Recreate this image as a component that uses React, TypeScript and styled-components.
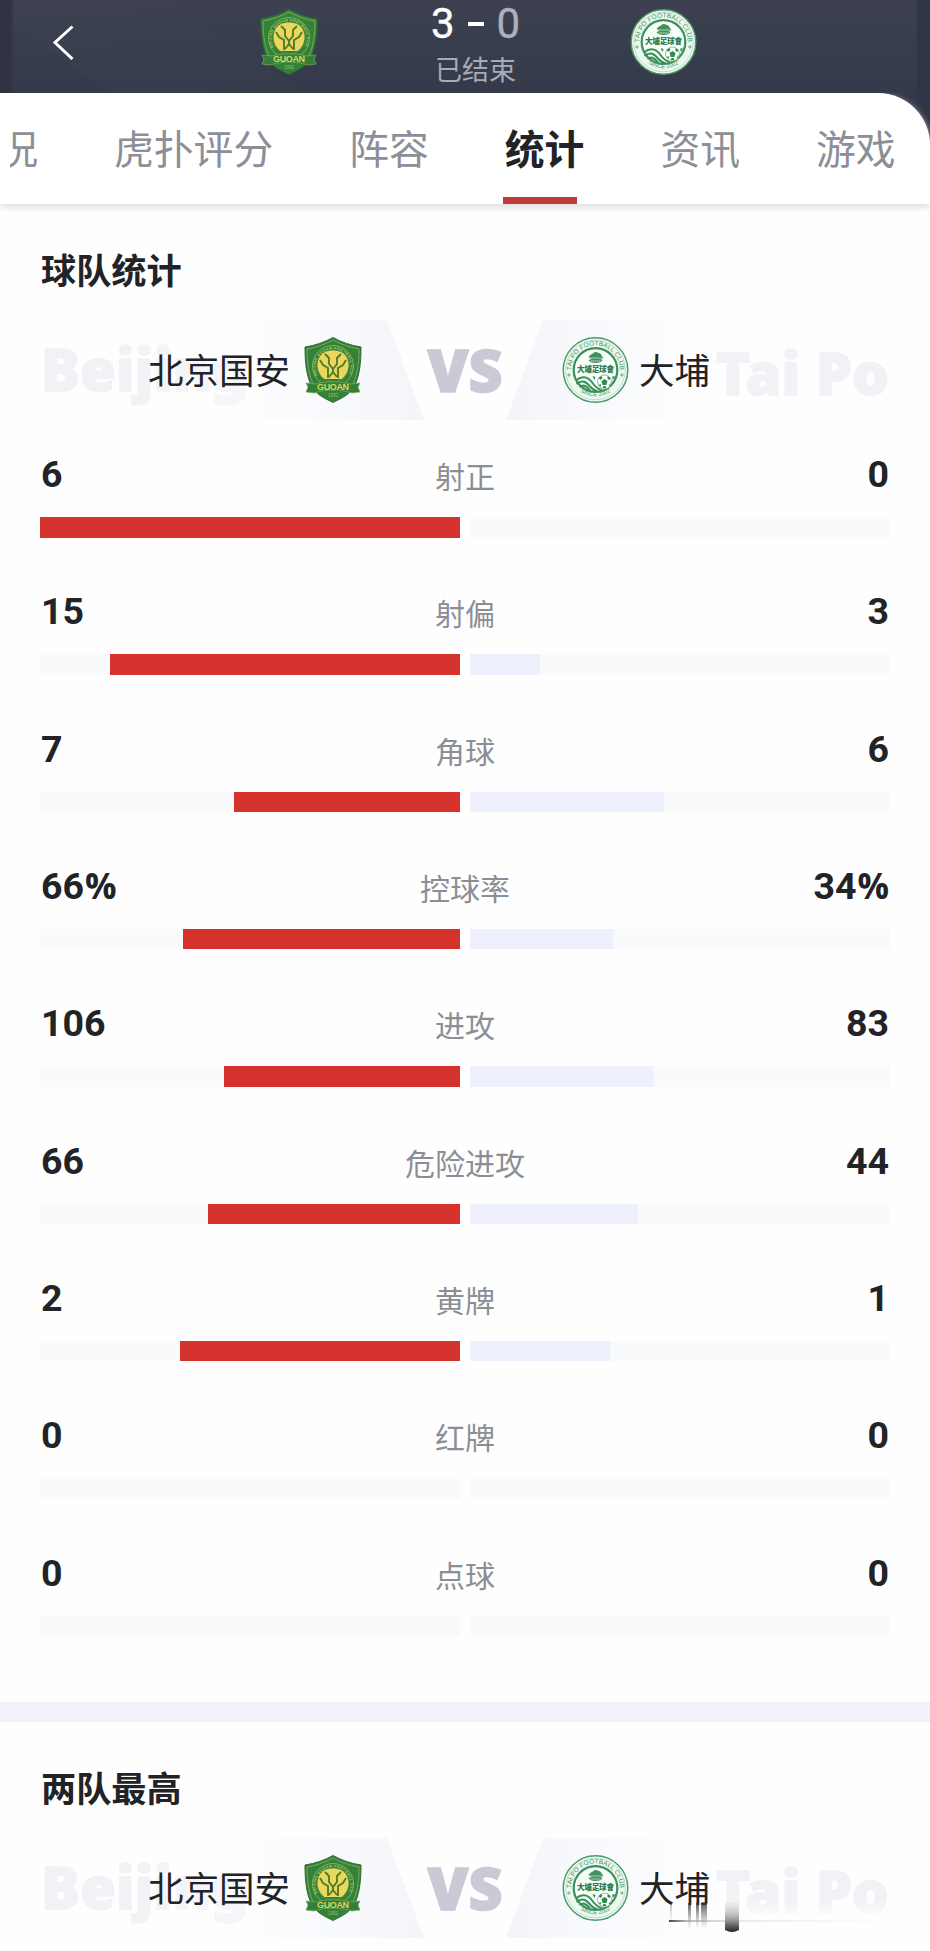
import React from "react";
import styled, { createGlobalStyle } from "styled-components";

interface Stat {
  label: string;
  home: number;
  away: number;
  unit?: string;
}

const tabs = ["况", "虎扑评分", "阵容", "统计", "资讯", "游戏"];
const activeTab = "统计";

const stats: Stat[] = [
  { label: "射正", home: 6, away: 0 },
  { label: "射偏", home: 15, away: 3 },
  { label: "角球", home: 7, away: 6 },
  { label: "控球率", home: 66, away: 34, unit: "%" },
  { label: "进攻", home: 106, away: 83 },
  { label: "危险进攻", home: 66, away: 44 },
  { label: "黄牌", home: 2, away: 1 },
  { label: "红牌", home: 0, away: 0 },
  { label: "点球", home: 0, away: 0 },
];

const GlobalStyle = createGlobalStyle`
  * {
    box-sizing: border-box;
  }

  body {
    margin: 0;
    background: #fefefe;
    font-family: "Noto Sans CJK SC", sans-serif;
    color: #222326;
  }

  svg {
    display: block;
  }
`;

const Page = styled.div`
  position: relative;
  width: 930px;
  height: 1951px;
  overflow: hidden;
`;

const Hero = styled.div`
  background:
    linear-gradient(90deg, #2d3140 0, #303443 11px, transparent 14px, transparent 915px, #2f3544 919px),
    linear-gradient(215deg, transparent 62%, #3f445233 62%, #41465533 78%, transparent 78%),
    linear-gradient(180deg, #3d4050 0, #383e4d 40px, #343a49 93px, #303645 100%);
`;

const Header = styled.header`
  height: 93px;
  display: grid;
  grid-template-columns: 260px 58px 1fr 67px 233px;
`;

const BackButton = styled.button`
  justify-self: start;
  height: 34px;
  margin: 25px 0 0 51px;
  padding: 0;
  border: 0;
  background: none;
`;

const HeaderBadge = styled.div`
  padding-top: 8.500px;
`;

const ScoreBox = styled.div`
  display: flex;
  flex-direction: column;
  align-items: center;
  padding-left: 3px;
`;

const Score = styled.div`
  display: flex;
  gap: 13px;
  height: 48px;
  color: #ffffff;
  font-family: Roboto, sans-serif;
  font-size: 42px;
  -webkit-text-stroke: 0.4px currentColor;
  line-height: 47px;
`;

const Dash = styled.i`
  width: 16px;
  height: 4px;
  margin-top: 22px;
  background: #ffffff;
`;

const LosingScore = styled.span`
  color: #adafba;
`;

const MatchState = styled.div`
  color: #a7aab7;
  font-size: 27px;
  line-height: 42px;
`;

const TabBar = styled.nav`
  position: relative;
  display: flex;
  gap: 76px;
  height: 111px;
  padding-left: 10px;
  border-top-right-radius: 52px;
  background: #ffffff;
  box-shadow: 0 3px 7px #dcdcdc;
  clip-path: inset(0 0 -12px 0);
`;

const Tab = styled.div<{ $active: boolean }>`
  flex: none;
  position: relative;
  color: ${(props) => (props.$active ? "#222326" : "#8c8e98")};
  font-size: 39.8px;
  font-weight: ${(props) => (props.$active ? 700 : 400)};
  line-height: 108px;

  &:first-child {
    display: flex;
    justify-content: flex-end;
    width: 28px;
    overflow: hidden;
  }

  &::after {
    content: "";
    display: ${(props) => (props.$active ? "block" : "none")};
    position: absolute;
    left: -2px;
    bottom: 0;
    width: 74px;
    height: 7px;
    background: #bf3a38;
  }
`;

const Section = styled.section`
  padding: 36px 40px 0;
`;

const SectionTitle = styled.h2`
  height: 60px;
  margin: 0 0 20px;
  padding-left: 1px;
  font-size: 35.2px;
  font-weight: 700;
  line-height: 57px;
`;

const Versus = styled.div`
  display: grid;
  grid-template-columns: 384px 82px 384px;
  height: 100px;
`;

const TeamSide = styled.div<{ $away?: boolean }>`
  position: relative;
  display: flex;
  align-items: center;
  justify-content: ${(props) => (props.$away ? "flex-start" : "flex-end")};
  gap: ${(props) => (props.$away ? "10px" : "14px")};
  padding: ${(props) => (props.$away ? "0 0 0 56px" : "0 62px 0 0")};
  background: linear-gradient(
    ${(props) => (props.$away ? "90deg" : "270deg")},
    #f4f5fa,
    #f9fafd 100px,
    #fefefe 200px
  );
  clip-path: ${(props) =>
    props.$away
      ? "polygon(37px 0, 100% 0, 100% 100%, 0 100%)"
      : "polygon(0 0, 347px 0, 100% 100%, 0 100%)"};
`;

// Latin team name behind the row
const GhostName = styled.span<{ $away?: boolean }>`
  position: absolute;
  top: ${(props) => (props.$away ? "13px" : "9px")};
  ${(props) => (props.$away ? "right: 1px" : "left: 1px")};
  font-family: "Noto Sans", sans-serif;
  font-size: 58px;
  font-weight: 900;
  line-height: 80px;
  white-space: nowrap;
  color: #f1f2f5;
  -webkit-text-stroke: 1.5px #f1f2f5;
  mask-image: ${(props) =>
    props.$away ? "none" : "linear-gradient(90deg, #000 40%, rgba(0, 0, 0, 0.6))"};
`;

const TeamName = styled.span`
  position: relative;
  padding-bottom: 3px;
  font-size: 35.5px;
  line-height: 97px;
`;

const VsMark = styled.div`
  align-self: center;
  text-align: center;
  color: #c9cad6;
  -webkit-text-stroke: 1.5px #c9cad6;
  font-family: "Noto Sans", sans-serif;
  font-size: 59px;
  font-weight: 900;
  line-height: 98px;
  padding-bottom: 2px;
`;

const StatList = styled.div`
  padding-top: 28px;
`;

const StatRow = styled.div`
  height: 137.33px;
`;

const StatHead = styled.div`
  display: grid;
  grid-template-columns: 1fr auto 1fr;
  height: 69px;
  padding: 0 1px;
`;

const StatValue = styled.span<{ $away?: boolean }>`
  text-align: ${(props) => (props.$away ? "right" : "left")};
  font-family: Roboto, sans-serif;
  font-size: 37.5px;
  font-weight: 700;
  line-height: 52px;
`;

const Unit = styled.span`
  margin-left: 1px;
  font-family: "Open Sans", sans-serif;
  font-size: 35px;
  line-height: 1;
`;

const StatLabel = styled.span`
  color: #8c8e96;
  font-size: 30px;
  line-height: 54px;
`;

const Bars = styled.div`
  display: grid;
  grid-template-columns: 1fr 1fr;
  gap: 10px;
`;

const Track = styled.div<{ $away?: boolean }>`
  display: flex;
  justify-content: ${(props) => (props.$away ? "flex-start" : "flex-end")};
  height: 20.5px;
  background: #f9fafc;
`;

const Fill = styled.div<{ $away?: boolean }>`
  background: ${(props) => (props.$away ? "#eef1fd" : "#d6322d")};
`;

const Divider = styled.div`
  height: 20px;
  margin-top: 18px;
  background: #f0f2f7;
`;

const Smudge = styled.svg`
  position: absolute;
  left: 660px;
  top: 1900px;
`;

const GuoanBadge: React.FC<{ id: string }> = ({ id }) => (
  <svg width="58" height="66" viewBox="0 0 58 66">
    <path d="M29 .5C21 5 11 8.500 1 10c0 16 1.500 28 6 38 4 9 13 13 22 17.500C38 61 47 57 51 48c4.500-10 6-22 6-38C47 8.500 37 5 29 .5z" fill="#338239" stroke="#2c6c35" />
    <path d="M29 3C21 7.500 12 10.500 3 12c0 15 2 26 6 35M29 3c8 4.500 17 7.500 26 9 0 15-2 26-6 35" fill="none" stroke="#88b45c" strokeWidth=".8" />
    <circle cx="29" cy="29" r="20.500" fill="none" stroke="#9cb957" strokeWidth=".8" />
    <path id={id} d="M13.500 38A17.500 17.500 0 1 1 44.500 38" fill="none" />
    <text fontFamily="Liberation Sans, sans-serif" fontSize="3.800" fontWeight="700" fill="#b9c962">
      <textPath href={`#${id}`} textLength="73">BEIJING GUOAN FOOTBALL CLUB</textPath>
    </text>
    <circle cx="29" cy="29.500" r="15.700" fill="#317f38" stroke="#68a04d" strokeWidth=".6" />
    <path d="M22 14.500c4-1.500 10-1.500 14 0 5 2 8.500 7 8.500 13.500 0 6-3 11-7 14h-17c-4-3-7-8-7-14 0-6.500 3.500-11.500 8.500-13.500z" fill="#ecd75c" />
    <path d="M21 17l4 4v6l4 5 4-5v-6l4-4M16 23l3 5 5 3v10M42 23l-3 5-5 3v10M29 32v3l-4 5M29 35l4 5" fill="none" stroke="#4c7d2c" strokeWidth="1.900" />
    <path d="M2 46l10 1c11-3 23-3 34 0l10-1-2 4 2 5-8 1c-12-4-26-4-38 0l-8-1 2-5z" fill="#347f38" stroke="#81aa59" strokeWidth=".7" />
    <text x="29" y="53" textAnchor="middle" textLength="32" fontFamily="Liberation Sans, sans-serif" fontSize="9" fontWeight="700" fill="#d4d85f">GUOAN</text>
    <text x="29" y="60" textAnchor="middle" fontFamily="Liberation Sans, sans-serif" fontSize="4.500" fill="#a0bc5c">1992</text>
  </svg>
);

const TaiPoBadge: React.FC<{ id: string }> = ({ id }) => (
  <svg width="67" height="66" viewBox="0 0 66 66">
    <circle cx="33" cy="33" r="32.300" fill="#ecf8ef" stroke="#4b9967" strokeWidth="1.400" />
    <circle cx="33" cy="33" r="29.800" fill="none" stroke="#8fc6a1" strokeWidth=".5" />
    <circle cx="33" cy="33" r="21.800" fill="#f7fdf8" stroke="#3c9159" strokeWidth="2.200" />
    <path id={`${id}-top`} d="M11 43A24.300 24.300 0 1 1 55 43" fill="none" />
    <path id={`${id}-bottom`} d="M14 52A28.500 28.500 0 0 0 52 52" fill="none" />
    <g fontFamily="Liberation Sans, sans-serif" fill="#459363">
      <text fontSize="6.500">
        <textPath href={`#${id}-top`} startOffset="50%" textAnchor="middle" textLength="77">TAI PO FOOTBALL CLUB</textPath>
      </text>
      <text fontSize="5.800">
        <textPath href={`#${id}-bottom`} startOffset="50%" textAnchor="middle" textLength="32">SINCE 2002</textPath>
      </text>
    </g>
    <path d="M26 20c1-1 2-3 4-3 1-2 4-3 6-1 2 0 3 2 4 4l1 1-3 1 2 1c-1 2-3 3-7 3s-6-1-7-3l3-1z" fill="#42905d" />
    <path d="M27 21h12M28 24h10" stroke="#d8efdd" strokeWidth=".7" />
    <rect x="14" y="27" width="38" height="10" fill="#f7fdf8" />
    <text x="33" y="35" textAnchor="middle" textLength="37" fontFamily="Noto Sans CJK TC, sans-serif" fontSize="7.600" fontWeight="900" fill="#2f7b49">大埔足球會</text>
    <path d="M14 43c6-5 12-3 16 3 3 4 5 6 9 7M14 47c6-5 10-2 14 3 2 2 4 4 7 4M17 50c4-3 7-1 11 4" fill="none" stroke="#349052" strokeWidth="2" />
    <circle cx="42" cy="45" r="7" fill="#fff" stroke="#5da675" strokeWidth=".7" />
    <path d="M42 42l3 2-1 4h-4l-1-4zM36 41l3-2 1 2-2 2zM45 39l3 2-1 2-2-1zM36 48l2-1 1 3zM46 49l2-3v3zM40 51h4l-1-2h-2zM30 39l3 1-1 3zM50 39l3 1-3 3z" fill="#2f8b4e" />
    <circle cx="6.500" cy="38" r="1.100" fill="none" stroke="#65a77c" />
    <circle cx="59.500" cy="38" r="1.100" fill="none" stroke="#65a77c" />
  </svg>
);

const TeamsHeader: React.FC<{ id: string }> = ({ id }) => (
  <Versus>
    <TeamSide>
      <GhostName>Beijing</GhostName>
      <TeamName>北京国安</TeamName>
      <GuoanBadge id={`${id}-guoan`} />
    </TeamSide>
    <VsMark>VS</VsMark>
    <TeamSide $away>
      <GhostName $away>Tai Po</GhostName>
      <TaiPoBadge id={`${id}-taipo`} />
      <TeamName>大埔</TeamName>
    </TeamSide>
  </Versus>
);

const StatItem: React.FC<{ stat: Stat }> = ({ stat }) => {
  const { label, home, away, unit } = stat;
  const total = home + away || 1;
  return (
    <StatRow>
      <StatHead>
        <StatValue>
          {home}
          {unit && <Unit>{unit}</Unit>}
        </StatValue>
        <StatLabel>{label}</StatLabel>
        <StatValue $away>
          {away}
          {unit && <Unit>{unit}</Unit>}
        </StatValue>
      </StatHead>
      <Bars>
        <Track>
          <Fill style={{ width: `${(home / total) * 100}%` }} />
        </Track>
        <Track $away>
          <Fill $away style={{ width: `${(away / total) * 100}%` }} />
        </Track>
      </Bars>
    </StatRow>
  );
};

const App: React.FC = () => (
  <Page>
    <GlobalStyle />
    <Hero>
      <Header>
        <BackButton aria-label="返回">
          <svg width="24" height="35" viewBox="0 0 24 35" fill="none" stroke="#fff" strokeWidth="3">
            <path d="M21.500 1.500L4 17.500l17.500 16.500" />
          </svg>
        </BackButton>
        <HeaderBadge>
          <GuoanBadge id="head-guoan" />
        </HeaderBadge>
        <ScoreBox>
          <Score>
            <span>3</span>
            <Dash />
            <LosingScore>0</LosingScore>
          </Score>
          <MatchState>已结束</MatchState>
        </ScoreBox>
        <HeaderBadge>
          <TaiPoBadge id="head-taipo" />
        </HeaderBadge>
      </Header>
      <TabBar>
        {tabs.map((tab) => (
          <Tab key={tab} $active={tab === activeTab}>
            {tab}
          </Tab>
        ))}
      </TabBar>
    </Hero>

    <Section>
      <SectionTitle>球队统计</SectionTitle>
      <TeamsHeader id="stats" />
      <StatList>
        {stats.map((stat) => (
          <StatItem key={stat.label} stat={stat} />
        ))}
      </StatList>
    </Section>
    <Divider />
    <Section>
      <SectionTitle>两队最高</SectionTitle>
      <TeamsHeader id="best" />
    </Section>

    <Smudge width="270" height="40" viewBox="0 0 270 40">
      <defs>
        <linearGradient id="streak" x1="0" y1="0" x2="0" y2="1">
          <stop offset="0" stopColor="#333" stopOpacity=".8" />
          <stop offset="1" stopColor="#777" stopOpacity="0" />
        </linearGradient>
        <linearGradient id="blob" x1="0" y1="0" x2="0" y2="1">
          <stop offset="0" stopColor="#ddd" stopOpacity=".3" />
          <stop offset=".6" stopColor="#999" />
          <stop offset="1" stopColor="#222" />
        </linearGradient>
        <linearGradient id="line" x1="0" y1="0" x2="1" y2="0">
          <stop offset="0" stopColor="#444" />
          <stop offset=".08" stopColor="#999" stopOpacity=".7" />
          <stop offset=".3" stopColor="#ccc" stopOpacity=".4" />
          <stop offset="1" stopColor="#ddd" stopOpacity="0" />
        </linearGradient>
        <linearGradient id="fade" x1="0" y1="0" x2="0" y2="1">
          <stop offset="0" stopColor="#fefefe" stopOpacity="0" />
          <stop offset=".7" stopColor="#fefefe" />
        </linearGradient>
      </defs>
      <rect x="50" y="0" width="205" height="34" fill="url(#fade)" />
      <rect x="10" y="3" width="2" height="20" fill="url(#streak)" opacity=".4" />
      <rect x="28" y="3" width="3" height="26" fill="url(#streak)" />
      <rect x="36" y="3" width="3" height="26" fill="url(#streak)" />
      <rect x="41" y="3" width="6" height="26" fill="url(#streak)" />
      <rect x="9" y="20" width="230" height="2" fill="url(#line)" />
      <path d="M65 2h14v28q-7 4-14 0z" fill="url(#blob)" />
    </Smudge>
  </Page>
);

export default App;
